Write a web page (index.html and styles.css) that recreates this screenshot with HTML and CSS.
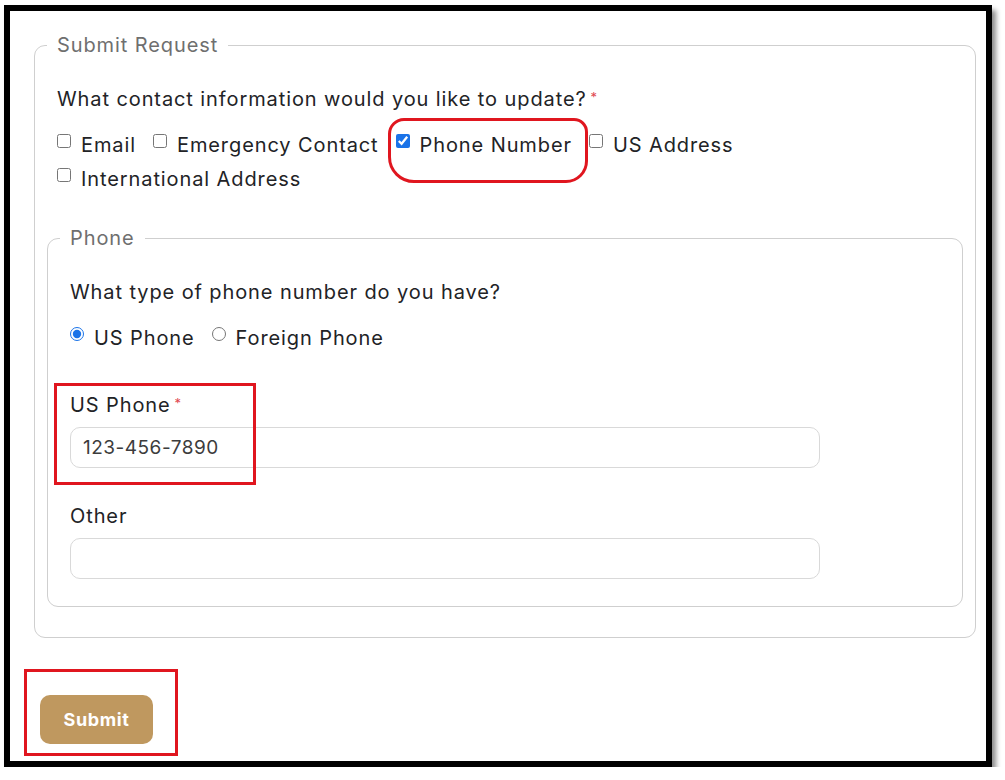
FILE: index.html
```html
<!DOCTYPE html>
<html lang="en">
<head>
<meta charset="utf-8">
<title>Submit Request</title>
<link rel="stylesheet" href="styles.css">
</head>
<body>
<div class="frame">
  <form class="form">
    <fieldset class="fs fs-outer">
      <legend class="legend">Submit Request</legend>
      <div class="group">
        <p class="question">What contact information would you like to update?<span class="req">*</span></p>
        <div class="options options-wrap">
          <label class="opt"><input class="box" type="checkbox"><span>Email</span></label>
          <label class="opt"><input class="box" type="checkbox"><span>Emergency Contact</span></label>
          <label class="opt"><input class="box" type="checkbox" checked><span>Phone Number</span></label>
          <label class="opt"><input class="box" type="checkbox"><span>US Address</span></label>
          <label class="opt"><input class="box" type="checkbox"><span>International Address</span></label>
        </div>
      </div>
      <fieldset class="fs fs-inner">
        <legend class="legend">Phone</legend>
        <div class="group">
          <p class="question">What type of phone number do you have?</p>
          <div class="options">
            <label class="opt"><input class="box" type="radio" name="ptype" checked><span>US Phone</span></label>
            <label class="opt"><input class="box" type="radio" name="ptype"><span>Foreign Phone</span></label>
          </div>
        </div>
        <div class="group field field-first">
          <label class="field-label" for="usphone">US Phone<span class="req">*</span></label>
          <input class="text-input" id="usphone" type="text" value="123-456-7890">
        </div>
        <div class="group field">
          <label class="field-label" for="other">Other</label>
          <input class="text-input" id="other" type="text">
        </div>
      </fieldset>
    </fieldset>
    <button class="submit" type="button">Submit</button>
  </form>
  <div class="mark mark-check"></div>
  <div class="mark mark-field"></div>
  <div class="mark mark-submit"></div>
</div>
</body>
</html>
```

FILE: styles.css
```css
* { box-sizing: border-box; }
html, body { margin: 0; padding: 0; background: #ffffff; }
body {
  font-family: "Inter", "Liberation Sans", sans-serif;
  color: #222326;
  letter-spacing: 0.9px;
}
.frame {
  position: relative;
  margin: 5px 0 0 4px;
  width: 988px;
  height: 762px;
  border: 6px solid #000;
  box-shadow: 4px 5px 5px rgba(0,0,0,0.45);
  background: #fff;
  padding: 22px 16px 0 24px;
}
.form { display: flex; flex-direction: column; align-items: flex-start; }
.fs {
  margin: 0;
  border: 1px solid #cfcfcf;
  border-radius: 11px;
  padding: 0 12px;
  min-width: 0;
}
.fs-outer { width: 942px; padding-bottom: 30px; }
.fs-inner { width: 916px; margin-top: 35px; padding-bottom: 27px; }
.legend {
  padding: 0 10px;
  font-size: 20px;
  line-height: 24px;
  color: #6f6f6f;
}
.group { padding: 0 10px; }
.question {
  margin: 30px 0 0;
  font-size: 20px;
  line-height: 24px;
}
.req { color: #e0474f; font-size: 13px; vertical-align: top; margin-left: 4px; position: relative; top: -2px; }
.options {
  display: flex;
  flex-wrap: wrap;
  column-gap: 17px;
  row-gap: 10px;
  margin-top: 22px;
}
.options-wrap { max-width: 720px; }
.opt {
  display: flex;
  align-items: flex-start;
  font-size: 20px;
  line-height: 24px;
}
.box {
  width: 14px;
  height: 14px;
  margin: 1px 10px 0 0;
  accent-color: #1a73e8;
}
.field-first { margin-top: 43px; }
.field { display: flex; flex-direction: column; align-items: flex-start; }
.field + .field { margin-top: 36px; }
.field-label { font-size: 20px; line-height: 24px; }
.text-input {
  margin-top: 10px;
  width: 750px;
  height: 41px;
  border: 1px solid #d9d9d9;
  border-radius: 10px;
  padding: 0 12px;
  font-family: inherit;
  font-size: 19px;
  letter-spacing: 0.5px;
  color: #3c3c3c;
  background: #fff;
}
.submit {
  margin: 57px 0 0 6px;
  width: 113px;
  height: 49px;
  border: none;
  border-radius: 10px;
  background: #bf985f;
  color: #fff;
  font-family: inherit;
  font-weight: 700;
  font-size: 18px;
  letter-spacing: 0.6px;
}
.mark {
  position: absolute;
  border: 3px solid #e0161f;
  pointer-events: none;
}
.mark-check { left: 378px; top: 107px; width: 200px; height: 65px; border-radius: 16px 14px 22px 26px; }
.mark-field { left: 44px; top: 372px; width: 202px; height: 102px; }
.mark-submit { left: 14px; top: 658px; width: 154px; height: 87px; }
```
